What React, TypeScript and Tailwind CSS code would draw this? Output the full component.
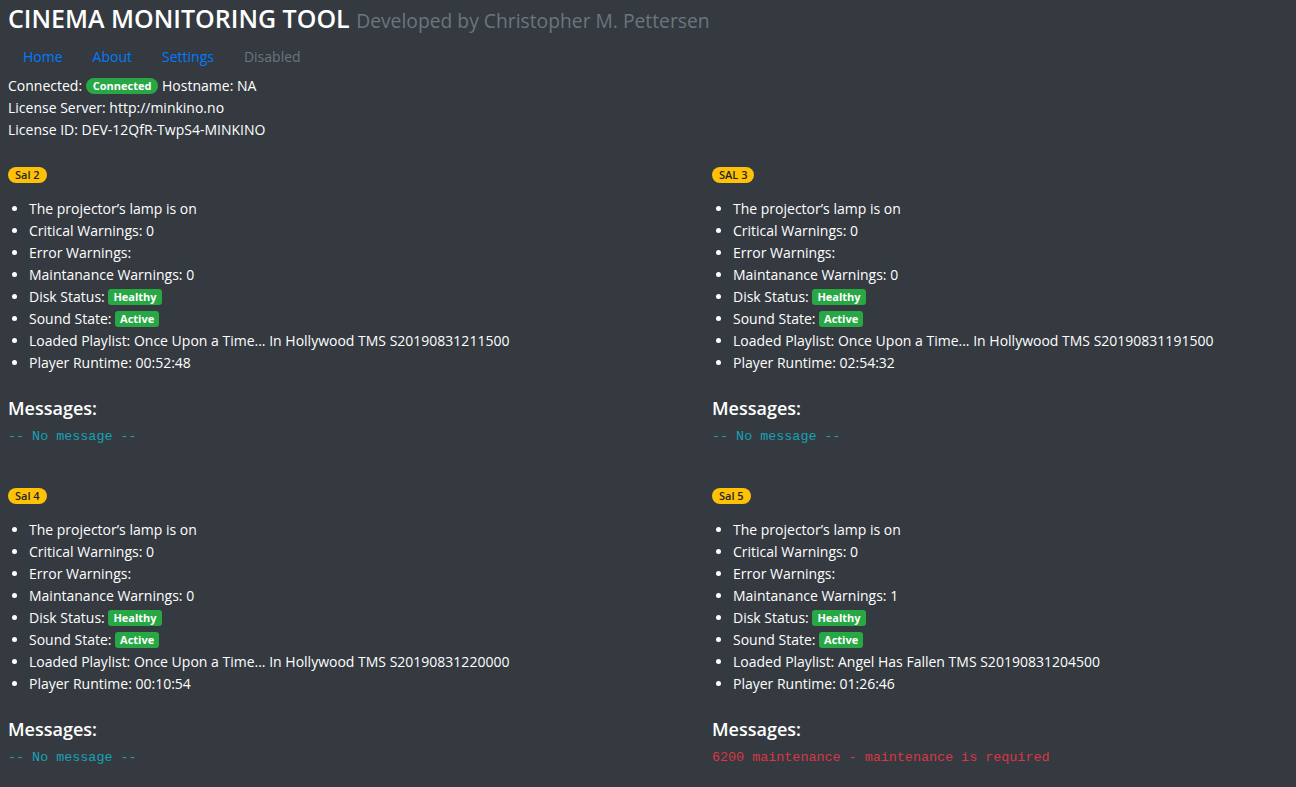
type Sal = {
  name: string
  critical: number
  maint: number
  playlist: string
  runtime: string
  message?: string
}

const salons: Sal[] = [
  { name: 'Sal 2', critical: 0, maint: 0, playlist: 'Once Upon a Time... In Hollywood TMS S20190831211500', runtime: '00:52:48' },
  { name: 'SAL 3', critical: 0, maint: 0, playlist: 'Once Upon a Time... In Hollywood TMS S20190831191500', runtime: '02:54:32' },
  { name: 'Sal 4', critical: 0, maint: 0, playlist: 'Once Upon a Time... In Hollywood TMS S20190831220000', runtime: '00:10:54' },
  {
    name: 'Sal 5',
    critical: 0,
    maint: 1,
    playlist: 'Angel Has Fallen TMS S20190831204500',
    runtime: '01:26:46',
    message: '6200 maintenance - maintenance is required',
  },
]

function GreenBadge({ label }: { label: string }) {
  return (
    <span className="inline-block rounded-[3px] bg-[#28a745] px-[5px] text-[11px] leading-[16px] font-bold text-white align-[1px]">
      {label}
    </span>
  )
}

function SalCard({ sal }: { sal: Sal }) {
  return (
    <div className="flex flex-col items-start">
      <span className="rounded-full bg-[#ffc107] px-[7px] text-[11px] leading-[16px] font-semibold text-[#212529]">
        {sal.name}
      </span>
      <ul className="mt-[15px] list-disc pl-[21px] leading-[22px] marker:text-white">
        <li>The projector’s lamp is on</li>
        <li>Critical Warnings: {sal.critical}</li>
        <li>Error Warnings:</li>
        <li>Maintanance Warnings: {sal.maint}</li>
        <li>
          Disk Status: <GreenBadge label="Healthy" />
        </li>
        <li>
          Sound State: <GreenBadge label="Active" />
        </li>
        <li>Loaded Playlist: {sal.playlist}</li>
        <li>Player Runtime: {sal.runtime}</li>
      </ul>
      <h5 className="mt-[24px] text-[18px] leading-[21px] font-semibold">Messages:</h5>
      {sal.message ? (
        <code className="mt-[8px] font-['Liberation_Mono',monospace] text-[13.4px] leading-[20px] text-[#dc3545]">
          {sal.message}
        </code>
      ) : (
        <code className="mt-[8px] font-['Liberation_Mono',monospace] text-[13.4px] leading-[20px] text-[#17a2b8]">
          -- No message --
        </code>
      )}
    </div>
  )
}

export default function App() {
  return (
    <div className="min-h-screen bg-[#343a40] px-2 font-['Open_Sans',sans-serif] text-[14px] text-white">
      <h1 className="pt-px text-[25px] leading-[34px] font-semibold">
        CINEMA MONITORING TOOL{' '}
        <small className="text-[19.3px] font-normal text-[#6c757d]">Developed by Christopher M. Pettersen</small>
      </h1>

      <nav className="mt-px flex leading-[22px]">
        <a className="px-[15px] py-[7px] text-[#007bff]" href="#">Home</a>
        <a className="px-[15px] py-[7px] text-[#007bff]" href="#">About</a>
        <a className="px-[15px] py-[7px] text-[#007bff]" href="#">Settings</a>
        <span className="px-[15px] py-[7px] text-[#6c757d]">Disabled</span>
      </nav>

      <div className="leading-[22px]">
        <div>
          Connected:{' '}
          <span className="inline-block rounded-full bg-[#28a745] px-[7px] text-[11px] leading-[16px] font-bold text-white align-[1px]">
            Connected
          </span>{' '}
          Hostname: NA
        </div>
        <div>License Server: http://minkino.no</div>
        <div>License ID: DEV-12QfR-TwpS4-MINKINO</div>
      </div>

      <div className="mt-[26px] grid grid-cols-[704px_1fr] gap-y-[41px]">
        {salons.map((s) => (
          <SalCard key={s.name} sal={s} />
        ))}
      </div>
    </div>
  )
}
